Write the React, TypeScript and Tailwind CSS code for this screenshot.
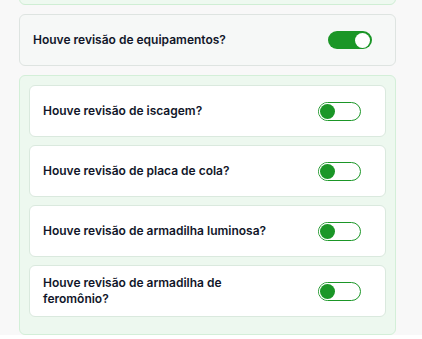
import { useState } from "react";

const subItems = [
  { id: "iscagem", label: "Houve revisão de iscagem?" },
  { id: "placa", label: "Houve revisão de placa de cola?" },
  { id: "luminosa", label: "Houve revisão de armadilha luminosa?" },
  { id: "feromonio", label: "Houve revisão de armadilha de feromônio?" },
];

function Toggle({ on, onClick }: { on: boolean; onClick: () => void }) {
  if (on) {
    return (
      <button
        onClick={onClick}
        className="flex h-[18px] w-[44px] shrink-0 items-center justify-end rounded-full bg-[#1b9627] pr-[2px]"
      >
        <span className="h-[15px] w-[15px] rounded-full bg-white" />
      </button>
    );
  }
  return (
    <button
      onClick={onClick}
      className="flex h-[19px] w-[43px] shrink-0 items-center rounded-full border border-[#1b9627] bg-white pl-[1px]"
    >
      <span className="h-[15px] w-[15px] rounded-full bg-[#1b9627] ring-1 ring-white" />
    </button>
  );
}

export default function App() {
  const [main, setMain] = useState(true);
  const [subs, setSubs] = useState<Record<string, boolean>>({});

  return (
    <div className="min-h-[339px] bg-[#f8f8f8] pl-[19px] pr-[26px] font-['Inter',sans-serif] text-[#111629]">
      <div className="-mt-[10px] h-[15px] rounded-b-md border border-[#cfeed4] bg-[#eef9f0]" />

      <div className="mt-[9px] flex h-[52px] items-center justify-between rounded-md border border-[#dee4e1] bg-[#f6f8f7] pl-[13px] pr-[23px]">
        <span className="text-[12px] font-semibold">Houve revisão de equipamentos?</span>
        <Toggle on={main} onClick={() => setMain(!main)} />
      </div>

      <div className="mt-[9px] flex flex-col gap-[8px] rounded-md border border-[#d3efd8] bg-[#edf8ef] px-[9px] pb-[17px] pt-[9px]">
        {subItems.map((item) => (
          <div
            key={item.id}
            className="flex min-h-[52px] items-center justify-between rounded-md border border-[#dae9de] bg-white py-[8px] pl-[13px] pr-[24px]"
          >
            <span className="w-[230px] text-[12px] font-semibold leading-[16px]">{item.label}</span>
            <Toggle
              on={!!subs[item.id]}
              onClick={() => setSubs({ ...subs, [item.id]: !subs[item.id] })}
            />
          </div>
        ))}
      </div>
    </div>
  );
}
